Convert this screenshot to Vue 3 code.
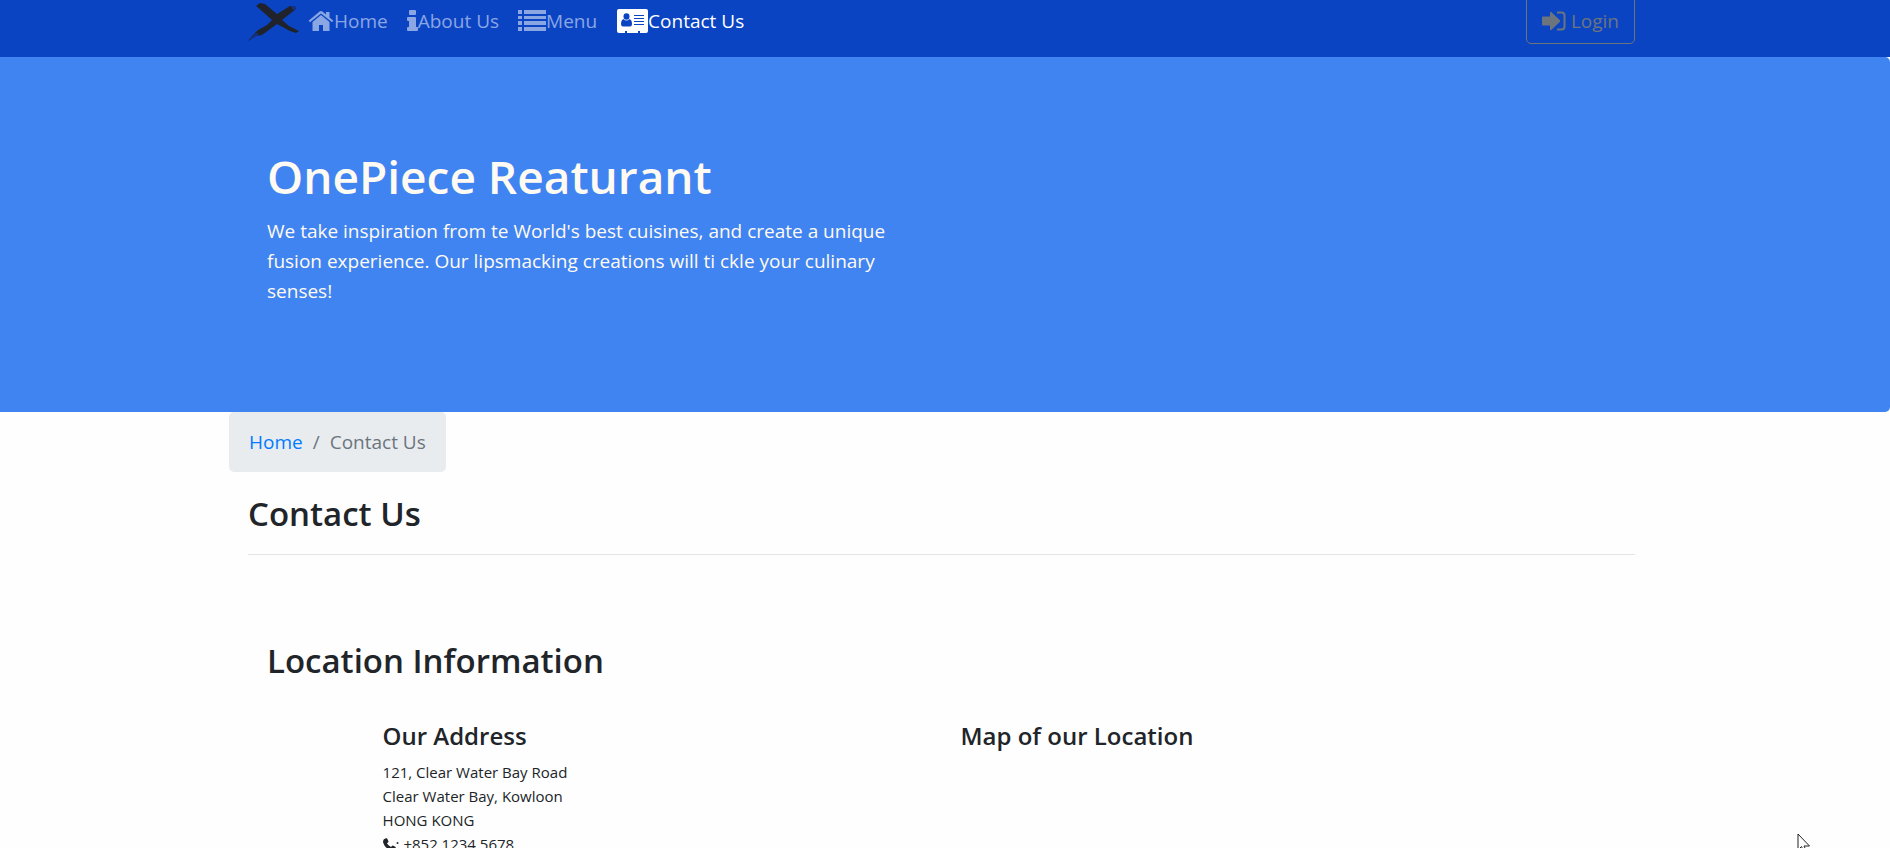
<script setup>
const navItems = [
  { label: 'Home', icon: 'home', active: false },
  { label: 'About Us', icon: 'info', active: false },
  { label: 'Menu', icon: 'list', active: false },
  { label: 'Contact Us', icon: 'card', active: true },
]
</script>

<template>
  <div class="page">
    <header class="navbar">
      <div class="container nav-inner">
        <a class="brand" href="#" aria-label="OnePiece Restaurant">
          <svg width="51" height="40" viewBox="0 0 51 40" aria-hidden="true">
            <path d="M0 38L6 31L10 27L19 22L24 17L15 9L8 3L12 0L17 1L29 11L42 3L47 3L48 6L34 17L41 23L51 28L48 30L42 28L29 21L14 32L8 33Z" fill="#20232c" />
            <path d="M0 38L8 30L11 31L5 35ZM43 3L47 3L48 6L45 7Z" fill="#173185" />
          </svg>
        </a>
        <nav class="links" aria-label="Main">
          <a v-for="item in navItems" :key="item.label" href="#" class="link" :class="{ active: item.active }">
            <svg v-if="item.icon === 'home'" width="26" height="24" viewBox="0 0 26 24" aria-hidden="true">
              <path d="M13 6L21.500 13V22H15V16H11V22H4.500V13Z" />
              <path d="M1.500 12.800L.6 11.700L11.600 2.600Q13 1.600 14.400 2.600L18 5.600V3H21.500V8.500L25.400 11.700L24.500 12.800Q24 13.200 23.500 12.800L13 4.500L2.500 12.800Q2 13.200 1.500 12.800Z" />
            </svg>
            <svg v-else-if="item.icon === 'info'" width="11" height="24" viewBox="0 0 11 24" aria-hidden="true">
              <path d="M3 1H8Q9 1 9 2V5Q9 6 8 6H3Q2 6 2 5V2Q2 1 3 1ZM1 8H8Q9 8 9 9V18H10Q11 18 11 19V21Q11 22 10 22H1Q0 22 0 21V19Q0 18 1 18H2V12H1Q0 12 0 11V9Q0 8 1 8Z" />
            </svg>
            <svg v-else-if="item.icon === 'list'" width="28" height="24" viewBox="0 0 28 24" aria-hidden="true">
              <path d="M0 1H4V5H0ZM6 1H28V5H6ZM0 7H4V10H0ZM6 7H28V10H6ZM0 12H4V16H0ZM6 12H28V16H6ZM0 18H4V22H0ZM6 18H28V22H6Z" />
            </svg>
            <svg v-else width="32" height="24" viewBox="0 0 32 24" aria-hidden="true">
              <rect x="1" y="0" width="31" height="24" rx="2" />
              <g class="cutout">
                <ellipse cx="10.500" cy="7.500" rx="3" ry="3.300" />
                <path d="M7.500 10Q10.500 13 13.500 10Q16 11 16 15Q16 17.500 14 17.500H7Q5 17.500 5 15Q5 11 7.500 10Z" />
                <path d="M18 6H28V7H18ZM18 9H28V10H18ZM18 12H28V13H18ZM18 15H28V16H18ZM9 22H11V24H9ZM22 22H24V24H22Z" />
              </g>
            </svg>
            <span>{{ item.label }}</span>
          </a>
        </nav>
        <button class="login" type="button">
          <svg width="24" height="20" viewBox="0 0 24 20" aria-hidden="true">
            <path d="M1 5.500H8V1.500Q8 .2 9.200 1L18 9.200Q18.600 10 18 10.800L9.200 19Q8 19.800 8 18.500V14.500H1Q0 14.500 0 13.500V6.500Q0 5.500 1 5.500Z" fill="currentColor" />
            <path d="M15 1.500H19.500Q22.500 1.500 22.500 4.500V15.500Q22.500 18.500 19.500 18.500H15" fill="none" stroke="currentColor" stroke-width="2" />
          </svg>
          <span>Login</span>
        </button>
      </div>
    </header>

    <section class="hero">
      <div class="container">
        <div class="hero-copy">
          <h1>OnePiece Reaturant</h1>
          <p>We take inspiration from te World's best cuisines, and create a unique fusion experience. Our lipsmacking creations will ti ckle your culinary senses!</p>
        </div>
      </div>
    </section>

    <main class="container">
      <nav class="breadcrumb" aria-label="Breadcrumb">
        <a href="#">Home</a>
        <span>/</span>
        <span aria-current="page">Contact Us</span>
      </nav>
      <h2 class="title">Contact Us</h2>
      <hr />
      <section class="location">
        <h2>Location Information</h2>
        <div class="address-block">
          <h3>Our Address</h3>
          <address>
            121, Clear Water Bay Road<br />
            Clear Water Bay, Kowloon<br />
            HONG KONG<br />
            <svg width="13" height="13" viewBox="0 0 13 13" aria-hidden="true">
              <path d="M3 .3L4 .2L5.600 3.500Q5.600 4 4 5.200Q5 7.500 8 9Q9.200 7.200 9.800 7.400L12.700 9.100Q13 12.700 9.700 12.900C5 12.600 .3 7.500 0 3.200Q.2 1 3 .3Z" fill="currentColor" />
            </svg>: +852 1234 5678
          </address>
        </div>
        <div class="map-block">
          <h3>Map of our Location</h3>
        </div>
      </section>
    </main>

    <svg class="pointer" width="14" height="22" viewBox="0 0 14 22" aria-hidden="true">
      <path d="M1 1V17L4.500 13.500L7.500 20L10 19L7 13H12.500Z" fill="#fff" stroke="#222" />
    </svg>
  </div>
</template>

<style>
html {
  overflow: hidden;
}
body {
  margin: 0;
  background: #fefefe;
}
</style>

<style scoped>
.page {
  font-family: "Open Sans", "Noto Sans", sans-serif;
  font-size: 19px;
  line-height: 30px;
  color: #212529;
}
.page * {
  box-sizing: border-box;
}
.container {
  width: calc(100% - 8px);
  max-width: 1425px;
  margin-left: max(0px, calc(50% - 716px));
  padding: 0 19px;
}
.navbar {
  background: #0a44c3;
}
.nav-inner {
  display: flex;
  align-items: flex-start;
  height: 57px;
}
.brand {
  display: flex;
  width: 60px;
  padding-top: 3px;
}
.links {
  display: flex;
  gap: 19px;
  padding-top: 6px;
}
.link {
  display: flex;
  align-items: center;
  color: #8aa6e3;
  text-decoration: none;
  white-space: nowrap;
}
.link.active {
  color: #fff;
}
.link svg {
  fill: currentColor;
}
.link .cutout {
  fill: #0a44c3;
}
.login {
  display: flex;
  align-items: center;
  gap: 5px;
  height: 48px;
  margin-top: -4px;
  margin-left: auto;
  padding: 1px 15px 0;
  border: 1px solid #6c757d;
  border-radius: 5px;
  background: transparent;
  color: #6c757d;
  font: inherit;
}
.hero {
  padding: 87px 0 106px;
  background: #3f84f1;
  border-radius: 0 5px 5px 0;
  color: #fffaf2;
}
.hero-copy {
  width: 50%;
  padding: 0 19px;
}
h1,
h2,
h3,
p {
  margin: 0;
  font-weight: 600;
}
h1 {
  margin-bottom: 8px;
  font-size: 46px;
  line-height: 64px;
}
p {
  font-weight: 400;
}
.breadcrumb {
  display: flex;
  gap: 10px;
  width: fit-content;
  margin-left: -19px;
  padding: 15px 20px;
  border-radius: 5px;
  background: #e9ecef;
  color: #6c757d;
}
.breadcrumb a {
  color: #007bff;
  text-decoration: none;
}
h2 {
  font-size: 33px;
  line-height: 42px;
}
.title {
  margin-top: 21px;
}
hr {
  height: 1px;
  margin: 19px 0 85px;
  border: 0;
  background: #e4e4e4;
}
.location {
  display: grid;
  grid-template-columns: repeat(12, 1fr);
}
.location h2 {
  grid-column: 1 / -1;
  margin-bottom: 39px;
  padding: 0 19px;
}
.address-block {
  grid-column: 2 / span 5;
  padding: 0 19px;
}
.map-block {
  grid-column: 7 / span 5;
  padding: 0 19px;
}
h3 {
  margin-bottom: 9px;
  font-size: 24px;
  line-height: 30px;
}
address {
  font-size: 15px;
  font-style: normal;
  line-height: 24px;
}
address svg {
  vertical-align: -1px;
}
.pointer {
  position: fixed;
  right: 79px;
  bottom: -7px;
}
</style>
